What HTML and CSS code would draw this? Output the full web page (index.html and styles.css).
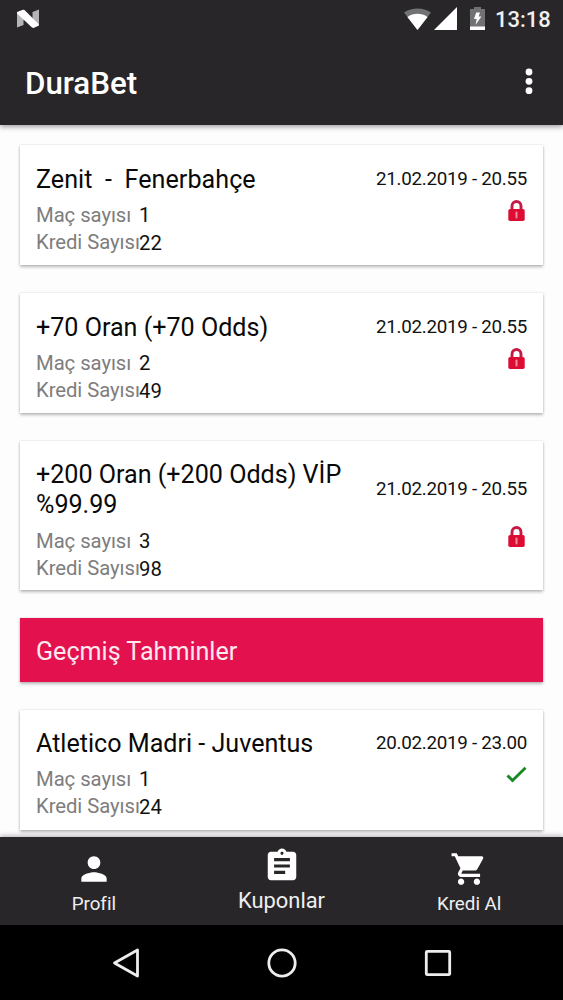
FILE: index.html
```html
<!DOCTYPE html>
<html lang="tr">
<head>
<meta charset="utf-8">
<title>DuraBet</title>
<link rel="stylesheet" href="styles.css">
</head>
<body>
<div class="screen">
  <header class="header">
    <div class="status">
      <svg class="nougat" width="24" height="20" viewBox="0 0 24 20"><path fill="#b4b3b5" d="M1 3L7.500 6v10L1 18.500zM23 .5v15.500L16.500 12V3z"/><path fill="#fff" d="M1 3L7 .8 8.500 1 23 15.500v1L17.500 19l-1.500-.5L1 4.500z"/></svg>
      <svg class="wifi" width="27" height="22" viewBox="0 0 27 22"><path fill="#727173" d="M0 4.500C8-.8 19-.8 27 4.500L13.500 22z"/><path fill="#fff" d="M3.400 9C9.500 4.800 17.500 4.800 23.600 9L13.500 22z"/></svg>
      <svg class="signal" width="23" height="23" viewBox="0 0 23 23"><path fill="#fff" d="M0 23L23 0v23z"/></svg>
      <svg class="battery" width="15" height="23" viewBox="0 0 15 23"><path fill="#727173" d="M4 0h7v2h4v18H0V2h4z"/><path fill="#fff" d="M0 19.500h15V23H0zM6.200 5.500H10L8.600 9.500h2.800L5.500 18l1.200-6H4z"/></svg>
      <span class="clock">13:18</span>
    </div>
    <div class="toolbar">
      <h1 class="app-title">DuraBet</h1>
      <svg class="more" width="8" height="27" viewBox="0 0 8 27" fill="#fff"><circle cx="4" cy="4" r="3.400"/><circle cx="4" cy="13.300" r="3.400"/><circle cx="4" cy="22.700" r="3.400"/></svg>
    </div>
  </header>

  <main class="list">
    <article class="card">
      <div class="head"><h2 class="title wide">Zenit&nbsp; -&nbsp; Fenerbahçe</h2><time class="date">21.02.2019 - 20.55</time></div>
      <div class="details">
        <dl class="facts"><dt>Maç sayısı</dt><dd>1</dd><dt>Kredi Sayısı</dt><dd class="credit">22</dd></dl>
        <svg class="lock" width="17" height="21" viewBox="0 0 17 21"><path d="M4 10V6.200a4.500 4.700 0 0 1 9 0V10" fill="none" stroke="#c51a45" stroke-width="2.900"/><rect x=".3" y="9" width="16.400" height="12" rx="1.800" fill="#dc0c32"/><path d="M8.500 12.500v5" stroke="#f48b9f" stroke-width="2" stroke-linecap="round"/></svg>
      </div>
    </article>
    <article class="card">
      <div class="head"><h2 class="title">+70 Oran (+70 Odds)</h2><time class="date">21.02.2019 - 20.55</time></div>
      <div class="details">
        <dl class="facts"><dt>Maç sayısı</dt><dd>2</dd><dt>Kredi Sayısı</dt><dd class="credit">49</dd></dl>
        <svg class="lock" width="17" height="21" viewBox="0 0 17 21"><path d="M4 10V6.200a4.500 4.700 0 0 1 9 0V10" fill="none" stroke="#c51a45" stroke-width="2.900"/><rect x=".3" y="9" width="16.400" height="12" rx="1.800" fill="#dc0c32"/><path d="M8.500 12.500v5" stroke="#f48b9f" stroke-width="2" stroke-linecap="round"/></svg>
      </div>
    </article>
    <article class="card tall">
      <div class="head"><h2 class="title">+200 Oran (+200 Odds) VİP<br>%99.99</h2><time class="date">21.02.2019 - 20.55</time></div>
      <div class="details">
        <dl class="facts"><dt>Maç sayısı</dt><dd>3</dd><dt>Kredi Sayısı</dt><dd class="credit">98</dd></dl>
        <svg class="lock" width="17" height="21" viewBox="0 0 17 21"><path d="M4 10V6.200a4.500 4.700 0 0 1 9 0V10" fill="none" stroke="#c51a45" stroke-width="2.900"/><rect x=".3" y="9" width="16.400" height="12" rx="1.800" fill="#dc0c32"/><path d="M8.500 12.500v5" stroke="#f48b9f" stroke-width="2" stroke-linecap="round"/></svg>
      </div>
    </article>
    <div class="section">Geçmiş Tahminler</div>
    <article class="card">
      <div class="head"><h2 class="title">Atletico Madri - Juventus</h2><time class="date">20.02.2019 - 23.00</time></div>
      <div class="details">
        <dl class="facts"><dt>Maç sayısı</dt><dd>1</dd><dt>Kredi Sayısı</dt><dd class="credit">24</dd></dl>
        <svg class="check" width="21" height="17" viewBox="0 0 21 17"><path d="M1.500 9.500l5 5L19.500 1.800" fill="none" stroke="#178a25" stroke-width="2.900"/></svg>
      </div>
    </article>
  </main>

  <nav class="tabs">
    <a class="tab"><svg width="38" height="38" viewBox="0 0 24 24" fill="#fff"><path d="M12 12c2.210 0 4-1.790 4-4s-1.790-4-4-4-4 1.790-4 4 1.790 4 4 4zm0 2c-2.670 0-8 1.340-8 4v2h16v-2c0-2.660-5.330-4-8-4z"/></svg><span>Profil</span></a>
    <a class="tab active"><svg width="38" height="38" viewBox="0 0 24 24" fill="#fff"><path d="M19 3h-4.180C14.400 1.840 13.300 1 12 1c-1.300 0-2.400.84-2.820 2H5c-1.100 0-2 .9-2 2v14c0 1.100.9 2 2 2h14c1.100 0 2-.9 2-2V5c0-1.100-.9-2-2-2zm-7 0c.55 0 1 .45 1 1s-.45 1-1 1-1-.45-1-1 .45-1 1-1zm2 14H7v-2h7v2zm3-4H7v-2h10v2zm0-4H7V7h10v2z"/></svg><span>Kuponlar</span></a>
    <a class="tab"><svg width="38" height="38" viewBox="0 0 24 24" fill="#fff"><path d="M7 18c-1.100 0-1.990.9-1.990 2S5.900 22 7 22s2-.9 2-2-.9-2-2-2zM1 2v2h2l3.600 7.590-1.350 2.450c-.16.280-.25.610-.25.960 0 1.100.9 2 2 2h12v-2H7.420c-.14 0-.25-.11-.25-.25l.03-.12.900-1.630h7.450c.75 0 1.410-.41 1.750-1.030l3.580-6.490c.08-.14.120-.31.120-.48 0-.55-.45-1-1-1H5.210l-.94-2H1zm16 16c-1.100 0-1.990.9-1.990 2s.89 2 1.990 2 2-.9 2-2-.9-2-2-2z"/></svg><span>Kredi Al</span></a>
  </nav>
  <div class="system">
    <svg width="30" height="32" viewBox="0 0 30 32"><path d="M26.500 3v26L3.500 16z" fill="none" stroke="#ededed" stroke-width="2.800" stroke-linejoin="round"/></svg>
    <svg width="30" height="32" viewBox="0 0 30 32"><circle cx="15" cy="16" r="13.200" fill="none" stroke="#ededed" stroke-width="2.800"/></svg>
    <svg width="30" height="32" viewBox="0 0 30 32"><rect x="3.300" y="4.300" width="23.400" height="23.400" rx="1" fill="none" stroke="#ededed" stroke-width="2.800"/></svg>
  </div>
</div>
</body>
</html>
```
FILE: styles.css
```css
* { box-sizing: border-box; }
body { margin: 0; background: #fdfdfd; font-family: Roboto, sans-serif; }
h1, h2, dl, dd { margin: 0; font-weight: 400; }
svg { display: block; flex: none; }
.screen { display: flex; flex-direction: column; width: 563px; height: 1000px; overflow: hidden; }

.header { flex: none; height: 125px; background: #282629; color: #fff; box-shadow: 0 2px 5px rgba(30, 20, 35, .4); z-index: 1; }
.status { display: flex; height: 38px; padding: 0 14px 0 16px; }
.nougat { margin-top: 9px; margin-right: auto; }
.wifi { margin-top: 8px; }
.signal { margin-top: 7px; margin-left: 3px; }
.battery { margin-top: 7px; margin-left: 13px; }
.clock { margin-left: 10px; width: 54px; font-size: 22px; line-height: 40px; font-weight: 500; white-space: nowrap; color: #f1f0f1; }
.toolbar { display: flex; align-items: center; justify-content: space-between; height: 87px; padding: 0 30px 0 25px; }
.app-title { font-size: 31.300px; line-height: 36px; font-weight: 500; padding-top: 4px; }

.list { flex: 1; min-height: 0; display: flex; flex-direction: column; gap: 28px; padding: 20px 20px 0; overflow: hidden; }
.card, .section { flex: none; box-shadow: 0 2px 3px rgba(0, 0, 0, .26), 0 0 2px rgba(0, 0, 0, .14); }
.card { background: #fff; padding: 20px 16px 0; height: 120px; }
.card.tall { height: 149px; padding-top: 19px; }
.head { display: flex; align-items: center; justify-content: space-between; }
.title { font-size: 25.100px; line-height: 29.500px; color: #090909; white-space: nowrap; }
.title.wide { letter-spacing: .05px; }
.date { margin-top: -1px; font-size: 18.770px; line-height: 22px; letter-spacing: -.27px; color: #111; white-space: nowrap; }
.details { display: flex; justify-content: space-between; padding-top: 7.500px; }
.tall .details { padding-top: 9px; }
.facts { display: grid; grid-template-columns: 103px auto; grid-auto-rows: 27px; font-size: 20.300px; line-height: 27px; color: #111; white-space: nowrap; }
.facts dt { color: #7d7d7d; letter-spacing: -.06px; }
.credit { padding-top: 1px; }
.lock { margin: -2px 2px 0 0; }
.section { height: 64px; padding: 0 16px; background: #e3124f; color: #ffe9ef; font-size: 25.100px; line-height: 67px; }
.section + .card { padding-top: 19px; }

.tabs { flex: none; display: flex; height: 88px; background: #282629; color: #efeff0; box-shadow: 0 -2px 4px rgba(30, 20, 35, .25); z-index: 1; }
.tab { flex: 1; display: flex; flex-direction: column; align-items: center; padding-top: 13px; font-size: 18.770px; line-height: 22px; }
.tab span { margin-top: 5px; }
.active { padding-top: 10px; font-size: 21.900px; line-height: 26px; }
.active span { margin-top: 3px; }
.system { flex: none; height: 75px; background: #000; display: flex; align-items: center; justify-content: center; gap: 126px; }
```
